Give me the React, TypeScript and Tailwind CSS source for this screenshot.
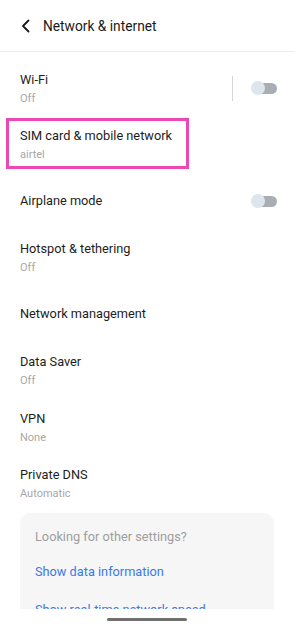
import type { ReactNode } from "react";

type RowProps = {
  title: string;
  subtitle?: string;
  toggle?: boolean;
  divider?: boolean;
  children?: ReactNode;
};

function Toggle() {
  return (
    <div className="relative h-[14px] w-[26px]">
      <div className="absolute right-0 top-[1.5px] h-[11px] w-[22px] rounded-full bg-[#a9aeb5]" />
      <div className="absolute left-0 top-0 h-[14px] w-[14px] rounded-full bg-[#dfe5ec]" />
    </div>
  );
}

function Row({ title, subtitle, toggle, divider, children }: RowProps) {
  return (
    <div className="relative flex h-[56.5px] items-center justify-between pl-[20px] pr-[17px]">
      <div className="flex flex-col">
        <div className="text-[12.75px] leading-[18px] text-[#1d1d1d]">{title}</div>
        {subtitle && (
          <div className="mt-[3px] text-[11px] leading-[14px] text-[#a8a8a8]">
            {subtitle}
          </div>
        )}
      </div>
      {toggle && (
        <div className="flex items-center">
          {divider && <div className="mr-[18px] h-[25px] w-px bg-[#d6d6d6]" />}
          <Toggle />
        </div>
      )}
      {children}
    </div>
  );
}

export default function App() {
  return (
    <div className="flex h-[628px] w-[294px] flex-col overflow-hidden bg-white font-['Roboto',sans-serif]">
      <header className="flex h-[52px] shrink-0 items-center border-b border-[#ededed] pl-[21px]">
        <svg width="9" height="14" viewBox="0 0 9 14" fill="none">
          <path
            d="M7.5 1.5 L2 7 L7.5 12.5"
            stroke="#1a1a1a"
            strokeWidth="1.8"
            strokeLinecap="round"
            strokeLinejoin="round"
          />
        </svg>
        <h1 className="ml-[13px] text-[13.75px] leading-[20px] text-[#1a1a1a]">
          Network &amp; internet
        </h1>
      </header>

      <main className="h-[557px] shrink-0 overflow-hidden pt-[7.75px]">
        <Row title="Wi-Fi" subtitle="Off" toggle divider />
        <Row title="SIM card & mobile network" subtitle="airtel">
          <div className="pointer-events-none absolute left-[6px] top-[1.5px] h-[51px] w-[183px] border-[3px] border-[#ec48b4]" />
        </Row>
        <Row title="Airplane mode" toggle />
        <Row title="Hotspot & tethering" subtitle="Off" />
        <Row title="Network management" />
        <Row title="Data Saver" subtitle="Off" />
        <Row title="VPN" subtitle="None" />
        <Row title="Private DNS" subtitle="Automatic" />

        <div className="mx-[20px] mt-[1px] rounded-[10px] bg-[#f6f6f6] px-[15px] pb-[12px] pt-[15px]">
          <div className="text-[12.75px] leading-[18px] text-[#9e9e9e]">
            Looking for other settings?
          </div>
          <div className="mt-[7px] py-[10px] text-[12.75px] leading-[18px] text-[#3c78e6]">
            Show data information
          </div>
          <div className="py-[10px] text-[12.75px] leading-[18px] text-[#3c78e6]">
            Show real-time network speed
          </div>
        </div>
      </main>

      <div className="flex flex-1 justify-center pt-[9px]">
        <div className="h-[3px] w-[80px] rounded-full bg-[#707070]" />
      </div>
    </div>
  );
}
